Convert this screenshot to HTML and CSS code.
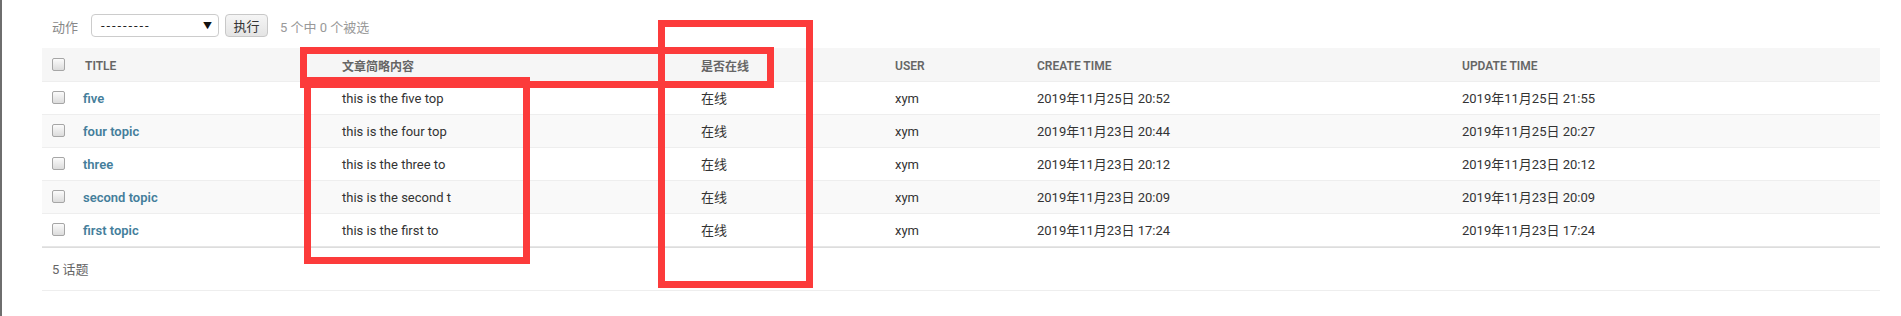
FILE: index.html
```html
<!DOCTYPE html>
<html lang="zh">
<head>
<meta charset="utf-8">
<title>话题</title>
<link rel="stylesheet" href="styles.css">
</head>
<body>
<div class="frame">
  <div class="content">
    <div class="actions">
      <label class="act-label">动作</label>
      <div class="select"><span class="sel-text">---------</span><span class="sel-arrow">▼</span></div>
      <button class="go">执行</button>
      <span class="counter">5 个中 0 个被选</span>
    </div>
    <table class="results">
      <colgroup>
        <col class="c-check"><col class="c-title"><col class="c-text"><col class="c-online"><col class="c-user"><col class="c-create"><col class="c-update">
      </colgroup>
      <thead>
        <tr>
          <th class="chk"><span class="box"></span></th>
          <th>TITLE</th>
          <th>文章简略内容</th>
          <th>是否在线</th>
          <th>USER</th>
          <th>CREATE TIME</th>
          <th>UPDATE TIME</th>
        </tr>
      </thead>
      <tbody>
        <tr>
          <td class="chk"><span class="box"></span></td>
          <th class="title"><a href="#">five</a></th>
          <td>this is the five top</td><td>在线</td><td>xym</td><td>2019年11月25日 20:52</td><td>2019年11月25日 21:55</td>
        </tr>
        <tr class="alt">
          <td class="chk"><span class="box"></span></td>
          <th class="title"><a href="#">four topic</a></th>
          <td>this is the four top</td><td>在线</td><td>xym</td><td>2019年11月23日 20:44</td><td>2019年11月25日 20:27</td>
        </tr>
        <tr>
          <td class="chk"><span class="box"></span></td>
          <th class="title"><a href="#">three</a></th>
          <td>this is the three to</td><td>在线</td><td>xym</td><td>2019年11月23日 20:12</td><td>2019年11月23日 20:12</td>
        </tr>
        <tr class="alt">
          <td class="chk"><span class="box"></span></td>
          <th class="title"><a href="#">second topic</a></th>
          <td>this is the second t</td><td>在线</td><td>xym</td><td>2019年11月23日 20:09</td><td>2019年11月23日 20:09</td>
        </tr>
        <tr>
          <td class="chk"><span class="box"></span></td>
          <th class="title"><a href="#">first topic</a></th>
          <td>this is the first to</td><td>在线</td><td>xym</td><td>2019年11月23日 17:24</td><td>2019年11月23日 17:24</td>
        </tr>
      </tbody>
    </table>
    <p class="paginator">5 话题</p>
  </div>
  <div class="mark mark-head"></div>
  <div class="mark mark-text"></div>
  <div class="mark mark-online"></div>
</div>
</body>
</html>
```

FILE: styles.css
```css
html, body {
  margin: 0;
  padding: 0;
  background: #fff;
}

body {
  font-family: Roboto, "Noto Sans CJK SC", sans-serif;
  color: #333;
  font-size: 13px;
}

.frame {
  position: relative;
  min-height: 316px;
  border-left: 2px solid #6e6e6e;
  box-sizing: border-box;
}

.content {
  padding: 0 21px 0 40px;
}

.actions {
  display: flex;
  align-items: center;
  height: 48px;
  box-sizing: border-box;
  padding: 14px 10px 11px 10px;
  color: #999;
  font-size: 13px;
}

.act-label {
  color: #888;
  margin-right: 13px;
  padding-top: 2px;
}

.select {
  width: 128px;
  height: 23px;
  box-sizing: border-box;
  border: 1px solid #ccc;
  border-radius: 4px;
  display: flex;
  align-items: center;
  justify-content: space-between;
  padding: 0 6px 0 9px;
  color: #222;
  background: #fff;
}

.sel-text {
  letter-spacing: 1.9px;
  font-size: 13px;
}

.sel-arrow {
  font-size: 9px;
  color: #111;
}

.go {
  margin-left: 6px;
  width: 43px;
  height: 23px;
  box-sizing: border-box;
  border: 1px solid #c8c8c8;
  border-radius: 4px;
  background: linear-gradient(#f5f5f5, #e4e4e4);
  font-family: Roboto, "Noto Sans CJK SC", sans-serif;
  font-size: 13px;
  color: #333;
  padding: 0;
}

.counter {
  margin-left: 12px;
  color: #999;
  padding-top: 2px;
}

.results {
  width: 100%;
  border-collapse: collapse;
  table-layout: fixed;
}

.c-check { width: 33px; }
.c-title { width: 259px; }
.c-text { width: 359px; }
.c-online { width: 194px; }
.c-user { width: 142px; }
.c-create { width: 425px; }
.c-update { width: 426px; }

thead th {
  background: #f6f6f6;
  color: #666;
  font-size: 12px;
  font-weight: 600;
  text-align: left;
  height: 33px;
  box-sizing: border-box;
  padding: 3px 8px 0 8px;
  border-bottom: 1px solid #eee;
  vertical-align: middle;
  white-space: nowrap;
}

thead th:nth-child(2) {
  padding-left: 10px;
}

tbody td, tbody th {
  height: 33px;
  box-sizing: border-box;
  padding: 2px 8px 0 8px;
  border-bottom: 1px solid #eee;
  text-align: left;
  vertical-align: middle;
  white-space: nowrap;
  overflow: hidden;
  font-weight: 400;
  line-height: 16px;
}

tbody tr:last-child td, tbody tr:last-child th {
  border-bottom: 1px solid #e6e6e6;
}

tbody tr.alt {
  background: #f9f9f9;
}

th.title a {
  color: #447e9b;
  font-weight: 600;
  text-decoration: none;
}

.chk {
  padding: 0 0 0 10px !important;
}

.box {
  display: block;
  width: 11px;
  height: 11px;
  border: 1px solid #a6a6a6;
  border-radius: 2px;
  background: linear-gradient(#fbfbfb, #dcdcdc);
}

.paginator {
  margin: 0;
  padding: 11px 10px 9px 10px;
  line-height: 22px;
  color: #666;
  font-size: 13px;
  border-top: 1px solid #ddd;
  border-bottom: 1px solid #eee;
}

.mark {
  position: absolute;
  box-sizing: border-box;
  border: 7px solid #fc3b3b;
}

.mark-head {
  left: 298px;
  top: 47px;
  width: 474px;
  height: 41px;
}

.mark-text {
  left: 302px;
  top: 77px;
  width: 226px;
  height: 187px;
}

.mark-online {
  left: 656px;
  top: 20px;
  width: 155px;
  height: 268px;
}
```
